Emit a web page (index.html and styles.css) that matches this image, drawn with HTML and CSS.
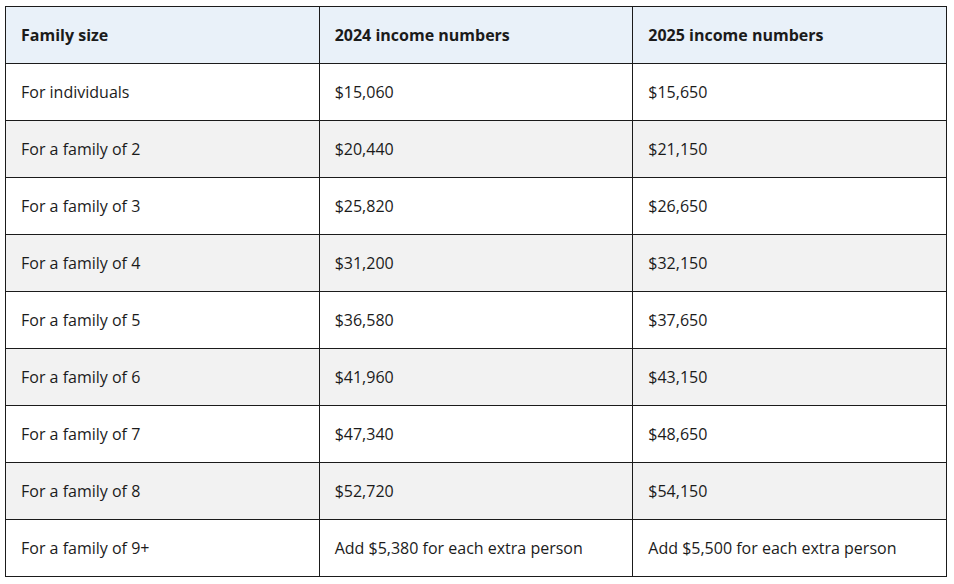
FILE: index.html
```html
<!DOCTYPE html>
<html lang="en">
<head>
<meta charset="utf-8">
<title>Income numbers</title>
<link rel="stylesheet" href="styles.css">
</head>
<body>
<div class="wrap">
<table class="income">
<thead>
<tr><th>Family size</th><th>2024 income numbers</th><th>2025 income numbers</th></tr>
</thead>
<tbody>
<tr><td>For individuals</td><td>$15,060</td><td>$15,650</td></tr>
<tr><td>For a family of 2</td><td>$20,440</td><td>$21,150</td></tr>
<tr><td>For a family of 3</td><td>$25,820</td><td>$26,650</td></tr>
<tr><td>For a family of 4</td><td>$31,200</td><td>$32,150</td></tr>
<tr><td>For a family of 5</td><td>$36,580</td><td>$37,650</td></tr>
<tr><td>For a family of 6</td><td>$41,960</td><td>$43,150</td></tr>
<tr><td>For a family of 7</td><td>$47,340</td><td>$48,650</td></tr>
<tr><td>For a family of 8</td><td>$52,720</td><td>$54,150</td></tr>
<tr><td>For a family of 9+</td><td>Add $5,380 for each extra person</td><td>Add $5,500 for each extra person</td></tr>
</tbody>
</table>
</div>
</body>
</html>
```

FILE: styles.css
```css
html, body {
  margin: 0;
  padding: 0;
  background: #ffffff;
}
.wrap {
  padding: 6px 0 0 5px;
}
.income {
  width: 942px;
  table-layout: fixed;
  border-collapse: collapse;
  font-family: "Open Sans", "Noto Sans", sans-serif;
  font-size: 16px;
  color: #1b1b1b;
}
.income th,
.income td {
  border: 1px solid #1b1b1b;
  padding: 0 15px;
  height: 56px;
  line-height: 24px;
  text-align: left;
  vertical-align: middle;
}
.income th {
  background: #e9f1f9;
  font-weight: 700;
}
.income tbody tr:nth-child(even) td {
  background: #f2f2f2;
}
```
